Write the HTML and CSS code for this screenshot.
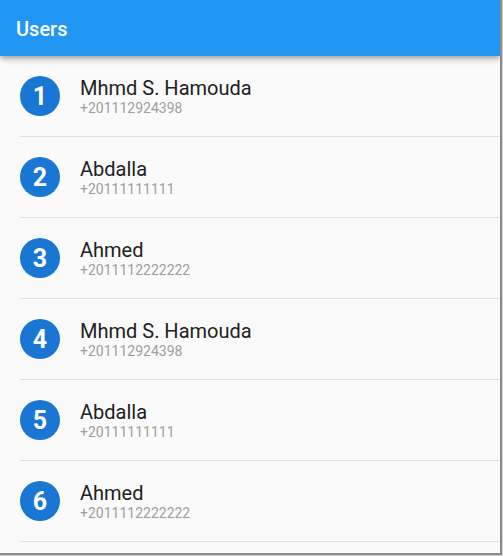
FILE: index.html
```html
<!DOCTYPE html>
<html>
<head>
<meta charset="utf-8">
<link rel="stylesheet" href="styles.css">
</head>
<body>
<div class="frame">
  <header class="appbar"><span class="title">Users</span></header>
  <ul class="list">
    <li class="row"><span class="avatar">1</span><div class="text"><div class="name">Mhmd S. Hamouda</div><div class="phone">+201112924398</div></div></li>
    <li class="row"><span class="avatar">2</span><div class="text"><div class="name">Abdalla</div><div class="phone">+20111111111</div></div></li>
    <li class="row"><span class="avatar">3</span><div class="text"><div class="name">Ahmed</div><div class="phone">+2011112222222</div></div></li>
    <li class="row"><span class="avatar">4</span><div class="text"><div class="name">Mhmd S. Hamouda</div><div class="phone">+201112924398</div></div></li>
    <li class="row"><span class="avatar">5</span><div class="text"><div class="name">Abdalla</div><div class="phone">+20111111111</div></div></li>
    <li class="row"><span class="avatar">6</span><div class="text"><div class="name">Ahmed</div><div class="phone">+2011112222222</div></div></li>
  </ul>
  <div class="scroll-thumb"></div>
</div>
</body>
</html>
```
FILE: styles.css
```css
* { box-sizing: border-box; }
html, body {
  margin: 0;
  padding: 0;
  background: #d4d4d4;
  font-family: Roboto, "Liberation Sans", sans-serif;
}
.frame {
  position: relative;
  width: 502px;
  height: 555px;
  background: #fafafa;
  border-right: 2px solid #8a8a8a;
  border-bottom: 2px solid #8a8a8a;
  overflow: hidden;
}
.appbar {
  position: relative;
  z-index: 1;
  height: 56px;
  background: #2196f3;
  display: flex;
  align-items: center;
  padding-left: 16px;
  box-shadow: 0 2px 4px -1px rgba(0,0,0,.2), 0 4px 5px 0 rgba(0,0,0,.14), 0 1px 10px 0 rgba(0,0,0,.12);
}
.title {
  color: #fff;
  font-size: 20px;
  font-weight: 500;
  line-height: 24px;
  margin-top: 1px;
}
.list {
  list-style: none;
  margin: 0;
  padding: 0;
}
.row {
  height: 81px;
  display: flex;
  align-items: center;
  padding: 0 16px 1px 20px;
  position: relative;
}
.row::after {
  content: "";
  position: absolute;
  left: 20px;
  right: 0;
  bottom: 0;
  height: 1px;
  background: #e0e0e0;
}
.avatar {
  width: 40px;
  height: 40px;
  border-radius: 50%;
  background: #1976d2;
  color: #fff;
  font-size: 25px;
  font-weight: 700;
  display: flex;
  align-items: center;
  justify-content: center;
  flex: none;
}
.text {
  margin-left: 20px;
  padding-top: 2px;
}
.name {
  font-size: 20px;
  line-height: 20px;
  color: #212121;
}
.phone {
  font-size: 14px;
  line-height: 16px;
  margin-top: 2px;
  color: #9e9e9e;
}
.scroll-thumb {
  position: absolute;
  right: -2px;
  top: 0;
  width: 2px;
  height: 15px;
  background: #222;
  z-index: 2;
}
```
